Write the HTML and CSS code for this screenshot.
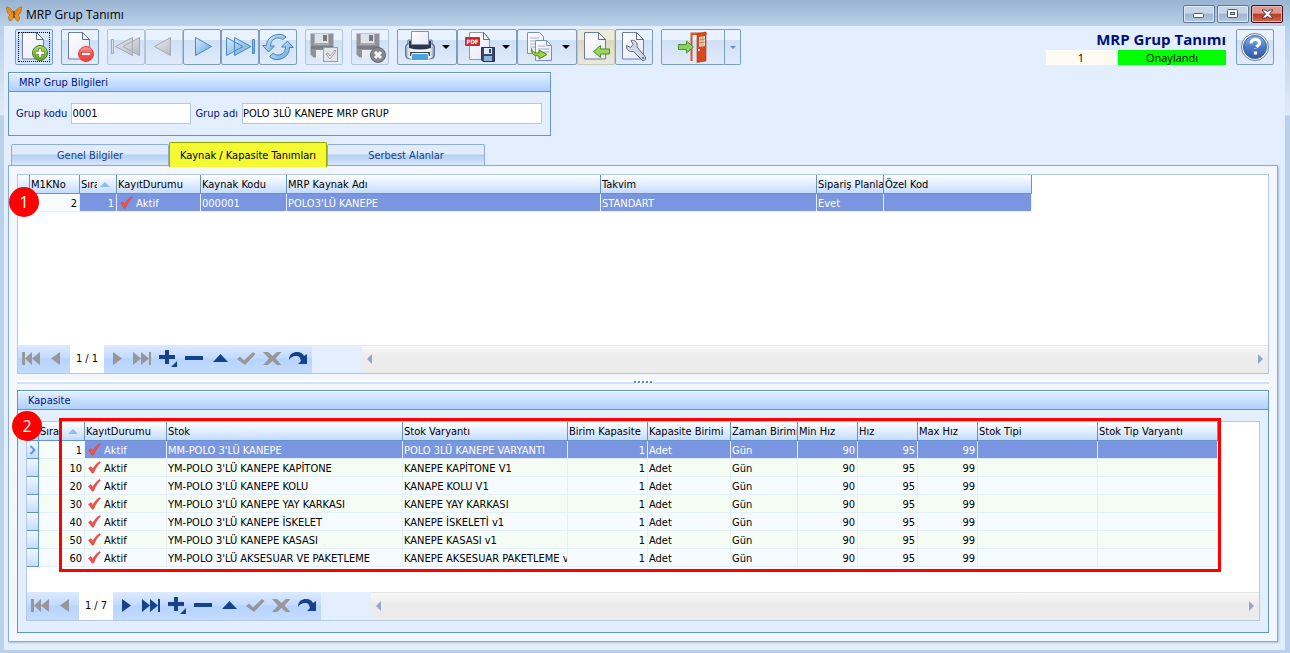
FILE: index.html
```html
<!DOCTYPE html>
<html lang="tr">
<head>
<meta charset="utf-8">
<title>MRP Grup Tanımı</title>
<link rel="stylesheet" href="styles.css">
</head>
<body>
<svg class="defs" aria-hidden="true">
  <defs>
    <linearGradient id="gPage" x1="0" y1="0" x2="1" y2="1"><stop offset="0" stop-color="#fff"/><stop offset="1" stop-color="#e4e8f6"/></linearGradient>
    <linearGradient id="gGreen" x1="0" y1="0" x2="0" y2="1"><stop offset="0" stop-color="#b4dd6a"/><stop offset="1" stop-color="#5f9f17"/></linearGradient>
    <linearGradient id="gRed" x1="0" y1="0" x2="0" y2="1"><stop offset="0" stop-color="#ff9d9d"/><stop offset=".5" stop-color="#f65050"/><stop offset="1" stop-color="#f03a3a"/></linearGradient>
    <linearGradient id="gBlue" x1="0" y1="0" x2="1" y2="1"><stop offset="0" stop-color="#d8ecfa"/><stop offset="1" stop-color="#5fa3dc"/></linearGradient>
    <linearGradient id="gGrey" x1="0" y1="0" x2="1" y2="1"><stop offset="0" stop-color="#eceff3"/><stop offset="1" stop-color="#b4b9c2"/></linearGradient>
    <linearGradient id="gHelp" x1="0" y1="0" x2="0" y2="1"><stop offset="0" stop-color="#8db6ea"/><stop offset=".5" stop-color="#4a7cc6"/><stop offset="1" stop-color="#2f57a6"/></linearGradient>
    <linearGradient id="gPrint" x1="0" y1="0" x2="1" y2="0"><stop offset="0" stop-color="#8e9cb8"/><stop offset=".15" stop-color="#f4f6fb"/><stop offset=".85" stop-color="#f4f6fb"/><stop offset="1" stop-color="#7685a3"/></linearGradient>
  </defs>
  <symbol id="page" viewBox="0 0 32 32"><path d="M4.500 1.500h14l7 7v19.500h-21z" fill="url(#gPage)" stroke="#6f7da6"/><path d="M18.500 1.500v7h7z" fill="#fff" stroke="#5c6c96"/></symbol>
  <symbol id="floppy" viewBox="0 0 32 32"><path d="M2.500 2.500h23v24h-20l-3-3z" fill="#8e939a"/><path d="M6 3h15v11H6z" fill="#a9adb3"/><path d="M7 3h13v9H7z" fill="#dfe2e6"/><path d="M15 4h4v6h-4z" fill="#737982"/><path d="M8 19h14v8H8z" fill="#e9ebee"/><path d="M3 15h22v3H3z" fill="#777d85"/></symbol>
  <symbol id="tick" viewBox="0 0 13 13"><path d="M0.500 7.200 3 5.600 4.700 8.200C6.500 4.800 8.600 2.300 11.600.5L12.500 1.200C9.600 4.200 7.400 7.600 5.600 12L4.200 12.200Z" fill="#f4504b" stroke="#cf4040" stroke-width=".5"/></symbol>
  <symbol id="n-first" viewBox="0 0 20 18"><path d="M1 3h3v13H1zM11 3v13L4 9.500zM19 3v13l-8-6.500z"/></symbol>
  <symbol id="n-prev" viewBox="0 0 20 18"><path d="M13 3v13L4 9.500z"/></symbol>
  <symbol id="n-next" viewBox="0 0 20 18"><path d="M6 3v13l9-6.500z"/></symbol>
  <symbol id="n-last" viewBox="0 0 20 18"><path d="M0 3v13l8-6.500zM8 3v13l8-6.500zM16 3h2v13h-2z"/></symbol>
  <symbol id="n-add" viewBox="0 0 20 18"><path d="M6 1h4v5h6v4h-6v5H6v-5H0V6h6zM18 12v6h-6z"/></symbol>
  <symbol id="n-del" viewBox="0 0 20 18"><path d="M0 7h18v4H0z"/></symbol>
  <symbol id="n-up" viewBox="0 0 20 18"><path d="M2 13h15L9.500 5z"/></symbol>
  <symbol id="n-ok" viewBox="0 0 20 18"><path d="M0 10l3-2.500 4 4 9-8.500 2.500 2L8 16z"/></symbol>
  <symbol id="n-no" viewBox="0 0 20 18"><path d="M0 3h5l4.500 4L14 3h4.500l-6 6.500 6 6.500H14l-4.500-4L5 16H0l6-6.500z"/></symbol>
  <symbol id="n-redo" viewBox="0 0 20 18"><path d="M0 11C0 5 4 3 8 3c4 0 6 2 7 4l3-2v10H9l3-3C11 8 10 7 7 7 4 7 2 8 0 11z"/></symbol>
</svg>

<div class="window">
  <header class="titlebar">
    <svg class="logo" viewBox="0 0 16 16"><path d="M8 7C6 3 3 1 0.500 1 0.500 5 1.500 8 4 9 2 10.500 2 14 4 15 6 15 7 12 8 10 9 12 10 15 12 15 14 14 14 10.500 12 9 14.500 8 15.500 5 15.500 1 13 1 10 3 8 7z" fill="#f0901c" stroke="#a8661c" stroke-width=".7"/><path d="M2 3c2 1 4 3 5 6M14 3c-2 1-4 3-5 6" stroke="#c06c10" stroke-width=".7" fill="none"/><path d="M8 5v7" stroke="#3c2408"/></svg>
    <h1 class="caption">MRP Grup Tanımı</h1>
    <button class="win-btn" aria-label="Küçült"><svg viewBox="0 0 30 16"><rect x="9.500" y="7.500" width="10" height="4" rx="1" fill="#fff" stroke="#4d5b70"/></svg></button>
    <button class="win-btn" aria-label="Büyüt"><svg viewBox="0 0 30 16"><rect x="9.500" y="3.500" width="10" height="8" rx="1" fill="#fff" stroke="#4d5b70"/><rect x="12.500" y="6.500" width="4" height="2" fill="#a9bdd6" stroke="#4d5b70"/></svg></button>
    <button class="win-btn close" aria-label="Kapat"><svg viewBox="0 0 30 16"><path d="M10 4h4l1.500 2L17 4h4l-3.500 4 3.500 4h-4l-1.500-2L14 12h-4l3.500-4z" fill="#fff" stroke="#5b3b43"/></svg></button>
  </header>

  <main class="client">
    <div class="toolbar">
      <div class="tb-group"><button class="tb focus" aria-label="Yeni"><svg viewBox="0 0 32 32"><use href="#page"/><circle cx="22" cy="22" r="7.500" fill="url(#gGreen)" stroke="#4a7f1c"/><path d="M20.500 17.500h3v3h3v3h-3v3h-3v-3h-3v-3h3z" fill="#fff" stroke="#4a7f1c" stroke-width=".6"/></svg></button></div>
      <div class="tb-group"><button class="tb" aria-label="Sil"><svg viewBox="0 0 32 32"><use href="#page"/><circle cx="22" cy="23" r="7.500" fill="url(#gRed)" stroke="#e04545"/><rect x="17.500" y="21.500" width="9" height="3" fill="#fff" stroke="#c53030" stroke-width=".6"/></svg></button></div>
      <div class="tb-group">
        <button class="tb off" aria-label="İlk"><svg viewBox="0 0 32 32" fill="url(#gGrey)" stroke="#a3a8b1"><path d="M1.500 8.500h2v14h-2zM22.500 6.500v18L5.500 15.500zM29.500 6.500v18L13 15.500z"/></svg></button>
        <button class="tb off" aria-label="Önceki"><svg viewBox="0 0 32 32" fill="url(#gGrey)" stroke="#a3a8b1"><path d="M22.500 6.500v18L6.500 15.500z"/></svg></button>
        <button class="tb" aria-label="Sonraki"><svg viewBox="0 0 32 32" fill="url(#gBlue)" stroke="#4c88c6"><path d="M9.500 6.500v18l16-9z"/></svg></button>
        <button class="tb" aria-label="Son"><svg viewBox="0 0 32 32" fill="url(#gBlue)" stroke="#4c88c6"><path d="M2.500 6.500v18L19 15.500zM10.500 6.500v18L27 15.500zM28.500 8.500h2v14h-2z"/></svg></button>
        <button class="tb" aria-label="Yenile"><svg viewBox="0 0 32 32" fill="url(#gBlue)" stroke="#4381bb" stroke-linejoin="round"><path d="M8.500 15C8.500 10 12 7 16 7c2 0 3.500.6 4.800 1.700L24 6C22 4 19 3 16 3.500 9 4 4.500 9 4.500 14.500H.7L6.500 21l6-6z"/><path d="M23.500 16C23.500 21 20 24 16 24c-2 0-3.500-.6-4.800-1.700L7.500 25.500C10 28 13 29 16 28.500c7-.5 11.500-6 11.500-12h3.800L25.500 10l-6 6z"/></svg></button>
      </div>
      <div class="tb-group"><button class="tb off" aria-label="Kaydet"><svg viewBox="0 0 32 32"><use href="#floppy"/><rect x="15.500" y="16.500" width="14" height="14" fill="#e3e5e8" stroke="#9a9ea5"/><path d="M18 23l2-1 2 3 5-6 1 1-6 8z" fill="#fff" stroke="#84888f" stroke-width=".8"/></svg></button></div>
      <div class="tb-group"><button class="tb off" aria-label="Vazgeç"><svg viewBox="0 0 32 32"><use href="#floppy"/><circle cx="24" cy="24" r="7.500" fill="#85898f" stroke="#666b72"/><path d="M21 21l6 6M27 21l-6 6" stroke="#fff" stroke-width="3"/></svg></button></div>
      <div class="tb-group">
        <button class="tb drop" aria-label="Yazdır"><svg viewBox="0 0 32 32"><path d="M4 9h3v8H3zM25 9h3l1 8h-4z" fill="#b9c3d8" stroke="#5c6b8a" stroke-width=".8"/><path d="M1.500 16q0-3 3-3h23q3 0 3 3v8q0 4-4 4h-21q-4 0-4-4z" fill="url(#gPrint)" stroke="#5c6b8a"/><path d="M5 10h22v7q-11 3-22 0z" fill="#2c3648"/><path d="M7.500.500h17v13h-17z" fill="url(#gPage)" stroke="#8390ae"/><path d="M6 21h20v4H6z" fill="#39445a"/><path d="M8 22.500h16l1 7H7z" fill="#4ba3de" stroke="#f5f8fc"/></svg><i class="caret"></i></button>
        <button class="tb drop" aria-label="PDF kaydet"><svg viewBox="0 0 32 32"><path d="M5.500 1.500h14l6 7v20h-20z" fill="url(#gPage)" stroke="#8a97b8"/><path d="M19.500 1.500v7h6z" fill="#fff" stroke="#5c6c96"/><rect x="1" y="6" width="15" height="9" rx="1" fill="#cc2a30"/><text x="8.500" y="13" class="pdf">PDF</text><path d="M17.500 16.500h13v14H19l-1.500-1.500z" fill="#34496b" stroke="#24344f"/><path d="M20 17h8v6h-8z" fill="#e3e9f3"/><path d="M25 18h2v4h-2z" fill="#34496b"/><path d="M20 25h8v5h-8z" fill="#8fb2d6"/></svg><i class="caret"></i></button>
        <button class="tb drop" aria-label="Kopyala"><svg viewBox="0 0 32 32"><path d="M3.500 1.500h12l4 4v17h-16z" fill="url(#gPage)" stroke="#7b8ebf"/><path d="M6 7h9M6 10h9M6 13h6M6 16h6" stroke="#9eb0d8"/><path d="M11.500 9.500h11l5 5v15h-16z" fill="url(#gPage)" stroke="#7b8ebf"/><path d="M22.500 9.500v5h5z" fill="#fff" stroke="#7b8ebf"/><path d="M14 15h7M14 18h11M14 21h11" stroke="#9eb0d8"/><path d="M7.500 17.500c1 4 3.500 4.500 7.500 4.500v-3l8 4.500-8 4.500v-3c-5 0-8-2-7.500-7.500z" fill="#9bd344" stroke="#56851c"/></svg><i class="caret"></i></button>
        <button class="tb hot" aria-label="Geri al"><svg viewBox="0 0 32 32"><use href="#page"/><path d="M13.500 20.500l7-6v3.500h9v5h-9v3.500z" fill="#9bd65a" stroke="#4f8c22"/></svg></button>
        <button class="tb" aria-label="Ayarlar"><svg viewBox="0 0 32 32"><use href="#page"/><path d="M8.500 14.500l4 2 2.500-3-2-4c4-1 7 2 6 6.500l8.500 10q1 3-2.500 4l-9.500-9.500c-4 1-7.500-1.500-7-6z" fill="#cfd6e4" stroke="#5f6e8c"/><circle cx="25" cy="27" r="1" fill="#4f5f80"/></svg></button>
      </div>
      <div class="tb-group exit">
        <button class="tb wide" aria-label="Çıkış"><svg viewBox="0 0 32 32"><path d="M13.500 30V1.500h16V4H15.500v26z" fill="#d8542a"/><path d="M20 3l9-2v29l-9 1.500z" fill="#d8481d" stroke="#a83412" stroke-width=".6"/><path d="M22 6l6-1v10l-6 1z" fill="#f5e2c4"/><path d="M24 6v10M26 5v10M22 9l6-1M22 12l6-1" stroke="#a06a4c" stroke-width=".6"/><circle cx="22" cy="19" r="1" fill="#fff"/><path d="M1.500 13.500h8v-3.500l7 6-7 6v-3.500h-8z" fill="#8ed062" stroke="#4c8f35"/></svg></button><button class="tb slim" aria-label="Çıkış seçenekleri"><i class="caret blue"></i></button>
      </div>
      <div class="status">
        <h2 class="form-title">MRP Grup Tanımı</h2>
        <div class="status-row"><span class="rev">1</span><span class="state">Onaylandı</span></div>
      </div>
      <button class="tb help" aria-label="Yardım"><svg viewBox="0 0 32 32"><circle cx="16" cy="16" r="13.500" fill="#fff" stroke="#6a7596"/><circle cx="16" cy="16" r="11.500" fill="url(#gHelp)" stroke="#3c5c9c"/><path d="M12 12.500c0-5.500 8.500-5 8.500-.5 0 3-4 3-4 6M16.400 20.500v3" fill="none" stroke="#fff" stroke-width="3.200" stroke-dasharray="17.500 2 4"/></svg></button>
    </div>

    <section class="panel info">
      <h3 class="panel-head">MRP Grup Bilgileri</h3>
      <div class="form">
        <label for="kod">Grup kodu</label><input id="kod" class="kod" type="text" value="0001">
        <label for="ad">Grup adı</label><input id="ad" class="ad" type="text" value="POLO 3LÜ KANEPE MRP GRUP">
      </div>
    </section>

    <nav class="tabs">
      <button class="tab">Genel Bilgiler</button>
      <button class="tab active">Kaynak / Kapasite Tanımları</button>
      <button class="tab">Serbest Alanlar</button>
    </nav>

    <div class="sheet">
      <section class="grid upper">
        <div class="rows">
          <table class="t1">
            <colgroup><col class="w12"><col class="w50"><col class="w37"><col class="w84"><col class="w86"><col class="w314"><col class="w216"><col class="w67"><col class="w148"></colgroup>
            <thead><tr><th></th><th>M1KNo</th><th class="sorted"><span class="clip">Sıra</span></th><th>KayıtDurumu</th><th>Kaynak Kodu</th><th>MRP Kaynak Adı</th><th>Takvim</th><th>Sipariş Planla</th><th>Özel Kod</th></tr></thead>
            <tbody><tr class="sel"><td class="ind"></td><td class="num cur">2</td><td class="num">1</td><td><svg class="tick"><use href="#tick"/></svg>Aktif</td><td>000001</td><td>POLO3'LÜ KANEPE</td><td>STANDART</td><td>Evet</td><td></td></tr></tbody>
          </table>
          <span class="badge one">1</span>
        </div>
        <footer class="nav">
          <button class="off" aria-label="İlk kayıt"><svg><use href="#n-first"/></svg></button><button class="off" aria-label="Önceki kayıt"><svg><use href="#n-prev"/></svg></button><span class="pos">1 / 1</span><button class="off" aria-label="Sonraki kayıt"><svg><use href="#n-next"/></svg></button><button class="off" aria-label="Son kayıt"><svg><use href="#n-last"/></svg></button><button aria-label="Ekle"><svg><use href="#n-add"/></svg></button><button aria-label="Çıkar"><svg><use href="#n-del"/></svg></button><button aria-label="Düzenle"><svg><use href="#n-up"/></svg></button><button class="off" aria-label="Onayla"><svg><use href="#n-ok"/></svg></button><button class="off" aria-label="İptal"><svg><use href="#n-no"/></svg></button><button aria-label="Tazele"><svg><use href="#n-redo"/></svg></button>
          <span class="gap"></span>
          <div class="hscroll"><i class="arrow left"></i><i class="arrow right"></i></div>
        </footer>
      </section>

      <div class="splitter"><i></i><i></i><i></i><i></i><i></i></div>

      <section class="panel kap">
        <h3 class="panel-head">Kapasite</h3>
        <div class="kap-body">
          <div class="grid">
            <div class="rows">
              <table class="t2">
                <colgroup><col class="w12"><col class="w46"><col class="w82"><col class="w236"><col class="w165"><col class="w80"><col class="w83"><col class="w67"><col class="w60"><col class="w60"><col class="w60"><col class="w120"><col class="w120"></colgroup>
                <thead><tr><th></th><th class="sorted">Sıra</th><th>KayıtDurumu</th><th>Stok</th><th>Stok Varyantı</th><th>Birim Kapasite</th><th>Kapasite Birimi</th><th>Zaman Birimi</th><th>Min Hız</th><th>Hız</th><th>Max Hız</th><th>Stok Tipi</th><th>Stok Tip Varyantı</th></tr></thead>
                <tbody>
                  <tr class="sel"><td class="ind"><svg class="row-mark" viewBox="0 0 8 10"><path d="M1.500 1l4 4-4 4" fill="none" stroke="#5b9be4" stroke-width="2"/></svg></td><td class="num cur">1</td><td><svg class="tick"><use href="#tick"/></svg>Aktif</td><td>MM-POLO 3'LÜ KANEPE</td><td>POLO 3LÜ KANEPE VARYANTI</td><td class="num">1</td><td>Adet</td><td>Gün</td><td class="num">90</td><td class="num">95</td><td class="num">99</td><td></td><td></td></tr>
                  <tr><td class="ind"></td><td class="num">10</td><td><svg class="tick"><use href="#tick"/></svg>Aktif</td><td>YM-POLO 3'LÜ KANEPE KAPİTONE</td><td>KANEPE KAPİTONE V1</td><td class="num">1</td><td>Adet</td><td>Gün</td><td class="num">90</td><td class="num">95</td><td class="num">99</td><td></td><td></td></tr>
                  <tr><td class="ind"></td><td class="num">20</td><td><svg class="tick"><use href="#tick"/></svg>Aktif</td><td>YM-POLO 3'LÜ KANEPE KOLU</td><td>KANAPE KOLU V1</td><td class="num">1</td><td>Adet</td><td>Gün</td><td class="num">90</td><td class="num">95</td><td class="num">99</td><td></td><td></td></tr>
                  <tr><td class="ind"></td><td class="num">30</td><td><svg class="tick"><use href="#tick"/></svg>Aktif</td><td>YM-POLO 3'LÜ KANEPE YAY KARKASI</td><td>KANEPE YAY KARKASI</td><td class="num">1</td><td>Adet</td><td>Gün</td><td class="num">90</td><td class="num">95</td><td class="num">99</td><td></td><td></td></tr>
                  <tr><td class="ind"></td><td class="num">40</td><td><svg class="tick"><use href="#tick"/></svg>Aktif</td><td>YM-POLO 3'LÜ KANEPE İSKELET</td><td>KANEPE İSKELETİ v1</td><td class="num">1</td><td>Adet</td><td>Gün</td><td class="num">90</td><td class="num">95</td><td class="num">99</td><td></td><td></td></tr>
                  <tr><td class="ind"></td><td class="num">50</td><td><svg class="tick"><use href="#tick"/></svg>Aktif</td><td>YM-POLO 3'LÜ KANEPE KASASI</td><td>KANEPE KASASI v1</td><td class="num">1</td><td>Adet</td><td>Gün</td><td class="num">90</td><td class="num">95</td><td class="num">99</td><td></td><td></td></tr>
                  <tr><td class="ind"></td><td class="num">60</td><td><svg class="tick"><use href="#tick"/></svg>Aktif</td><td>YM-POLO 3'LÜ AKSESUAR VE PAKETLEME</td><td>KANEPE AKSESUAR PAKETLEME v</td><td class="num">1</td><td>Adet</td><td>Gün</td><td class="num">90</td><td class="num">95</td><td class="num">99</td><td></td><td></td></tr>
                </tbody>
              </table>
              <span class="frame"></span>
              <span class="badge two">2</span>
            </div>
            <footer class="nav">
              <button class="off" aria-label="İlk kayıt"><svg><use href="#n-first"/></svg></button><button class="off" aria-label="Önceki kayıt"><svg><use href="#n-prev"/></svg></button><span class="pos">1 / 7</span><button aria-label="Sonraki kayıt"><svg><use href="#n-next"/></svg></button><button aria-label="Son kayıt"><svg><use href="#n-last"/></svg></button><button aria-label="Ekle"><svg><use href="#n-add"/></svg></button><button aria-label="Çıkar"><svg><use href="#n-del"/></svg></button><button aria-label="Düzenle"><svg><use href="#n-up"/></svg></button><button class="off" aria-label="Onayla"><svg><use href="#n-ok"/></svg></button><button class="off" aria-label="İptal"><svg><use href="#n-no"/></svg></button><button aria-label="Tazele"><svg><use href="#n-redo"/></svg></button>
              <span class="gap"></span>
              <div class="hscroll"><i class="arrow left"></i><i class="arrow right"></i></div>
            </footer>
          </div>
        </div>
      </section>
    </div>
  </main>
</div>
</body>
</html>
```
FILE: styles.css
```css
* { box-sizing: border-box; }
body { margin: 0; font: 11px/14px "DejaVu Sans Condensed", "DejaVu Sans", sans-serif; color: #000; }
button, input { font: inherit; color: inherit; margin: 0; }
h1, h2, h3 { margin: 0; font-size: 11px; font-weight: normal; }
.defs { position: absolute; width: 0; height: 0; }

.window { min-height: 100vh; display: flex; flex-direction: column; padding: 0 5px 4px 4px; background: linear-gradient(#99b4d1 0, #b9d1ea 26px, #dfeaf8 115px, #b9d1ea 116px); }
.titlebar { height: 26px; display: flex; align-items: center; gap: 2px; padding: 2px 2px 0; }
.logo { width: 16px; height: 16px; }
.caption { flex: 1; padding: 1px 2px 0; font: 12px/16px "Open Sans", sans-serif; }
.win-btn { width: 32px; height: 18px; padding: 0; border: 1px solid #5f7896; border-radius: 2px; background: linear-gradient(#c6d6e8 45%, #9db5d0 50%, #b5cae2); box-shadow: inset 0 0 0 1px #dde8f4; }
.win-btn svg { display: block; width: 30px; height: 16px; }
.win-btn.close { border-color: #4c1018; background: linear-gradient(#dd9a8e 45%, #b73a26 50%, #cf6a52); box-shadow: inset 0 0 0 1px #e8b5aa; }

.client { flex: 1; display: flex; flex-direction: column; padding: 3px 7px 8px 4px; background: #e3eeff; }
.toolbar { display: flex; align-items: flex-start; gap: 8px; padding: 0 4px 0 7px; }
.tb-group { display: flex; }
.tb { width: 38px; height: 36px; display: flex; align-items: center; justify-content: center; padding: 0; border: 1px solid #7c9cc5; border-radius: 2px; background: linear-gradient(#e9f2ff 28%, #d0e0f5 30%, #e0ebfb); }
.tb svg { width: 32px; height: 32px; flex: none; }
.tb.off { border-color: #b3c5dd; }
.tb.focus { background: linear-gradient(#d6e8fc 28%, #bcd7f6 30%, #d3e8ff); outline: 1px dotted #000; outline-offset: -4px; }
.tb.hot { border-color: #c5cbb9; background: linear-gradient(#eeecd8 28%, #ddd9bf 30%, #e9e9dc); }
.tb.drop { width: 60px; justify-content: flex-start; gap: 6px; padding-left: 6px; }
.tb.wide { width: 64px; padding-left: 0; border-radius: 2px 0 0 2px; }
.tb.slim { width: 16px; border-left: 0; border-radius: 0 2px 2px 0; }
.caret { border: 4px solid transparent; border-top: 4px solid #000; border-bottom: 0; }
.caret.blue { border-width: 3px 3px 0; border-top-color: #5b8bd0; }
.pdf { font: bold 6px "DejaVu Sans Condensed", sans-serif; fill: #fff; text-anchor: middle; }
.status { margin-left: auto; width: 180px; }
.form-title { height: 21px; text-align: right; font: bold 15px/21px "Open Sans", sans-serif; color: #000f78; }
.status-row { display: flex; gap: 2px; height: 15px; font: 11px/15px "Open Sans", sans-serif; text-align: center; }
.rev { width: 70px; background: #fffbf0; }
.state { flex: 1; background: #0f0; }
.help { margin-left: 2px; }

.panel { border: 1px solid #6593cf; display: flex; flex-direction: column; background: #e3eeff; }
.panel-head { height: 19px; padding: 2px 10px; border-top: 1px solid #fff; border-bottom: 1px solid #6593cf; background: linear-gradient(#e2efff, #aed0ff); color: #00157f; }
.info { width: 543px; margin-top: 7px; }
.form { display: flex; align-items: center; gap: 4px; padding: 11px 8px 11px 7px; color: #00157f; }
.form input { height: 21px; padding: 0; border: 1px solid #b0c8e8; background: #fff; color: #000; }
.kod { width: 120px; }
.ad { flex: 1; min-width: 0; }

.tabs { display: flex; align-items: flex-end; height: 25px; margin: 6px 3px -2px; position: relative; }
.tab { width: 158px; height: 21px; margin-bottom: 2px; padding: 2px 0 0; border: 1px solid #8fadd6; border-bottom: 0; border-radius: 2px 2px 0 0; background: linear-gradient(#e0ecfc 45%, #b3cff3 50%, #d8e7fb); color: #15428b; }
.tab.active { height: 25px; margin-bottom: 0; border-color: #8fa600; background: #f5f932; color: #000; }

.sheet { flex: 1; display: flex; flex-direction: column; padding: 8px; border: 1px solid #8ba9d2; box-shadow: 1px 1px 2px #a9c0e0; background: #f2f7fe; }
.grid { flex: 1; display: flex; flex-direction: column; border: 1px solid #b3c8e4; background: #fff; min-width: 0; }
.upper { flex: 1 1 200px; }
.rows { flex: 1; position: relative; }
table { table-layout: fixed; border-spacing: 0; width: 0; }
.w12 { width: 12px; } .w37 { width: 37px; } .w46 { width: 46px; } .w50 { width: 50px; } .w60 { width: 60px; }
.w67 { width: 67px; } .w80 { width: 80px; } .w82 { width: 82px; } .w83 { width: 83px; } .w84 { width: 84px; }
.w86 { width: 86px; } .w120 { width: 120px; } .w148 { width: 148px; } .w165 { width: 165px; }
.w216 { width: 216px; } .w236 { width: 236px; } .w314 { width: 314px; }
th, td { overflow: hidden; white-space: nowrap; text-align: left; font-weight: normal; padding: 2px 0 0 1px; }
th { height: 19px; border-right: 1px solid #6593cf; border-bottom: 1px solid #6593cf; background: linear-gradient(#fff, #c4dcff); }
td { height: 18px; border-right: 1px solid #e3eeff; border-bottom: 1px solid #e3eeff; background: #f6fbff; }
tr:nth-child(even) td { background: #f5fcf3; }
tr.sel td { background: #7b96e0; color: #fff; }
tr.sel td.cur { background: #f8fcff; color: #000; }
td.num { text-align: right; padding-right: 2px; }
td.ind, tr:nth-child(even) td.ind, tr.sel td.ind { padding: 0 2px; border-color: #6593cf; background: linear-gradient(#f2f8ff, #c4dcff); }
.tick { width: 13px; height: 13px; margin: -1px 3px 0 2px; vertical-align: -2px; }
.row-mark { display: block; width: 8px; height: 10px; }
.clip { display: block; width: 16px; overflow: hidden; }
th.sorted { position: relative; }
th.sorted::after { content: ""; position: absolute; right: 6px; top: 7px; border: 5px solid transparent; border-top: 0; border-bottom-color: #8fbcf5; }

.nav { display: flex; height: 28px; background: #e3eeff; }
.nav button { width: 26px; padding: 0 0 2px; border: 0; display: flex; align-items: center; justify-content: center; background: linear-gradient(#dceaff, #c3dbff 45%, #b7d4fe 50%, #c3dbff); color: #15428b; }
.nav svg { width: 20px; height: 18px; fill: #15428b; }
.nav .off svg { fill: #979797; }
.pos { width: 34px; background: #fff; text-align: center; line-height: 28px; }
.gap { width: 50px; }
.hscroll { flex: 1; display: flex; justify-content: space-between; align-items: center; padding: 0 5px 2px; border-top: 1px solid #e6e6e6; background: linear-gradient(#f8f8f8, #ececec 40%); }
.arrow { border: 5px solid transparent; }
.arrow.left { border-left: 0; border-right-color: #93a5cc; }
.arrow.right { border-right: 0; border-left-color: #93a5cc; }

.splitter { height: 16px; display: flex; justify-content: center; align-items: center; gap: 2px; background: linear-gradient(transparent 6px, #fff 6px, #fff 8px, #cfe1fa 8px, #cfe1fa 10px, transparent 10px); }
.splitter i { width: 2px; height: 2px; background: #5b8bd0; box-shadow: 1px 1px #fff; }
.kap { flex: 1 1 243px; }
.kap-body { flex: 1; display: flex; padding: 11px 8px; }

.frame { position: absolute; left: 32px; top: -4px; width: 1162px; height: 154px; border: 3px solid #f00; }
.badge { position: absolute; width: 30px; height: 30px; border-radius: 50%; background: #f00; color: #fff; font: 16px/30px "Open Sans", sans-serif; text-align: center; }
.badge.one { left: -9px; top: 12px; }
.badge.two { left: -15px; top: -11px; }
```
